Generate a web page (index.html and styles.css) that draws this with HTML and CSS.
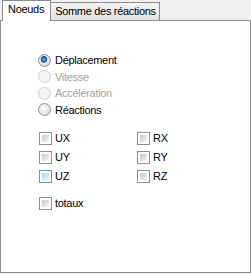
FILE: index.html
```html
<!DOCTYPE html>
<html lang="fr">
<head>
  <meta charset="UTF-8">
  <title>Résultats</title>
  <link rel="stylesheet" href="styles.css">
</head>
<body>
  <div class="tab-control">
    <div class="tab-strip">
      <div class="tab active">Noeuds</div>
      <div class="tab">Somme des réactions</div>
    </div>
    <div class="panel">
      <div class="radio-group">
        <label class="option"><input type="radio" class="radio" name="kind" checked> Déplacement</label>
        <label class="option disabled"><input type="radio" class="radio" name="kind" disabled> Vitesse</label>
        <label class="option disabled"><input type="radio" class="radio" name="kind" disabled> Accélération</label>
        <label class="option"><input type="radio" class="radio" name="kind"> Réactions</label>
      </div>
      <div class="check-grid">
        <label class="option"><input type="checkbox" class="check"> UX</label>
        <label class="option"><input type="checkbox" class="check"> RX</label>
        <label class="option"><input type="checkbox" class="check"> UY</label>
        <label class="option"><input type="checkbox" class="check"> RY</label>
        <label class="option"><input type="checkbox" class="check hover"> UZ</label>
        <label class="option"><input type="checkbox" class="check"> RZ</label>
      </div>
      <div class="totals">
        <label class="option"><input type="checkbox" class="check"> totaux</label>
      </div>
    </div>
  </div>
</body>
</html>
```

FILE: styles.css
```css
body {
  margin: 0;
  background-color: #F0F0F0;
  font-family: "Liberation Sans", Arial, sans-serif;
  font-size: 11px;
  letter-spacing: -0.3px;
  color: #000000;
}

.tab-control {
  display: flex;
  flex-direction: column;
  height: 273px;
}

.tab-strip {
  display: flex;
  align-items: flex-end;
  height: 20px;
  padding-left: 2px;
}

.tab {
  box-sizing: border-box;
  height: 18px;
  padding: 1px 3px 0 4px;
  line-height: 14px;
  border: 1px solid #898C95;
  border-bottom: none;
  border-left: none;
  background: linear-gradient(#F3F3F3, #E1E1E1);
  white-space: nowrap;
}

.tab.active {
  position: relative;
  z-index: 1;
  height: 21px;
  margin-bottom: -1px;
  padding: 1px 6px 0 5px;
  border-left: 1px solid #898C95;
  background: #FFFFFF;
}

.panel {
  flex: 1;
  border: 1px solid #898C95;
  background-color: #FFFFFF;
  padding: 31px 0 0 37px;
}

.option {
  display: flex;
  align-items: center;
  gap: 4px;
  height: 16px;
}

.option.disabled {
  color: #A3A3A3;
}

.radio-group {
  display: grid;
  grid-auto-rows: 16px;
  row-gap: 0.5px;
}

.radio {
  appearance: none;
  box-sizing: border-box;
  width: 13px;
  height: 13px;
  margin: 0;
  border: 1px solid #8E8F8F;
  border-radius: 50%;
  background: radial-gradient(circle at 40% 40%, #FFFFFF, #D2D2D2);
}

.radio:checked {
  background:
    radial-gradient(circle at 45% 40%, #7CC4F2 0, #1F73B8 2px, #0A4C8A 3px, transparent 3.6px),
    radial-gradient(circle at 40% 40%, #FFFFFF, #D2D2D2);
}

.radio:disabled {
  border-color: #D2D2D2;
  background: #F4F4F4;
}

.check-grid {
  display: grid;
  grid-template-columns: 98px auto;
  grid-auto-rows: 13px;
  row-gap: 6px;
  margin: 14px 0 0 1px;
  width: 140px;
}

.check-grid .option,
.totals .option {
  height: 13px;
  gap: 3px;
}

.check {
  appearance: none;
  box-sizing: border-box;
  width: 13px;
  height: 13px;
  margin: 0;
  padding: 2px;
  border: 1px solid #8E8F8F;
  background: linear-gradient(135deg, #C4C8CE, #F5F5F5) content-box, #FFFFFF;
}

.check.hover {
  border-color: #5C98C6;
  background: linear-gradient(135deg, #ABD3F1, #EAF5FD) content-box, #FFFFFF;
}

.totals {
  margin: 14px 0 0 1px;
}
```
